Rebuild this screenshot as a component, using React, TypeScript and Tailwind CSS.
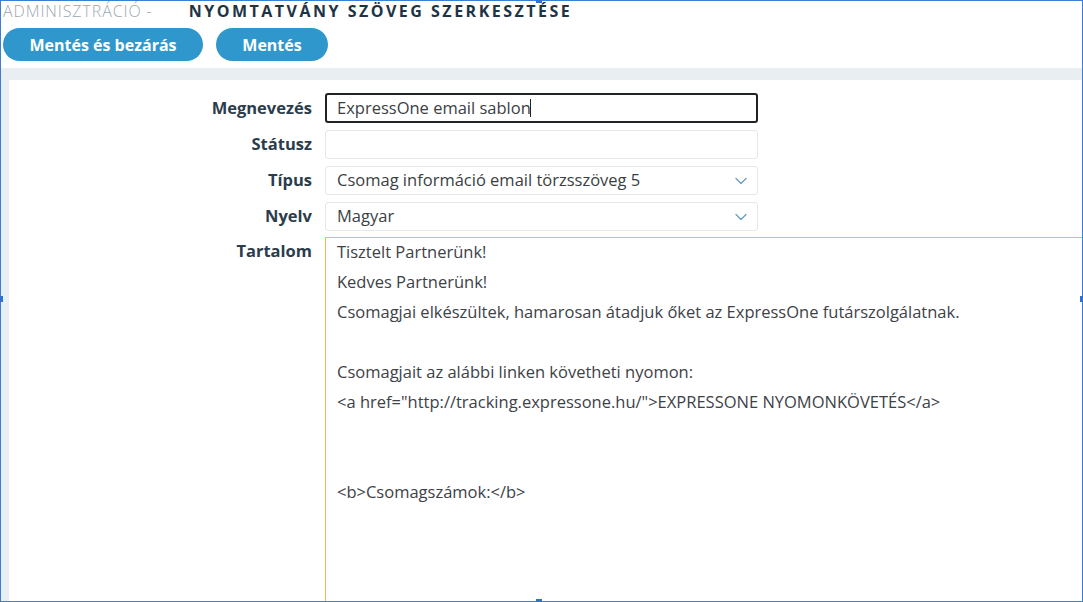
import { ChevronDown } from "lucide-react";

// Űrlap sorai: címke + mező
const FIELDS: { label: string; value: string; kind: "focus" | "text" | "select" }[] = [
  { label: "Megnevezés", value: "ExpressOne email sablon", kind: "focus" },
  { label: "Státusz", value: "", kind: "text" },
  { label: "Típus", value: "Csomag információ email törzsszöveg 5", kind: "select" },
  { label: "Nyelv", value: "Magyar", kind: "select" },
];

const CONTENT_LINES = [
  "Tisztelt Partnerünk!",
  "Kedves Partnerünk!",
  "Csomagjai elkészültek, hamarosan átadjuk őket az ExpressOne futárszolgálatnak.",
  "",
  "Csomagjait az alábbi linken követheti nyomon:",
  '<a href="http://tracking.expressone.hu/">EXPRESSONE NYOMONKÖVETÉS</a>',
  "",
  "",
  "<b>Csomagszámok:</b>",
  "",
  "",
];

export default function App() {
  return (
    <div
      className="relative h-[602px] w-[1083px] overflow-hidden bg-white"
      style={{ fontFamily: '"Open Sans", "Liberation Sans", sans-serif' }}
    >
      {/* Fejléc */}
      <div className="h-[68px] px-[3px] pt-[1px]">
        <h1 className="flex items-baseline text-[16px] leading-[21px] uppercase">
          <span className="font-light tracking-[0.9px] text-[#9ba7b3]">Adminisztráció -</span>
          <span className="ml-[36px] font-bold tracking-[2.5px] text-[#1d3447]">
            Nyomtatvány szöveg szerkesztése
          </span>
        </h1>
        <div className="mt-[6px] flex gap-[13px]">
          <button className="h-[33px] w-[200px] rounded-full bg-[#3097cc] text-[16px] font-bold text-white">
            Mentés és bezárás
          </button>
          <button className="h-[33px] w-[112px] rounded-full bg-[#3097cc] text-[16px] font-bold text-white">
            Mentés
          </button>
        </div>
      </div>

      {/* Szerkesztő panel */}
      <div className="h-full bg-[#e9eef2] pl-[9px] pt-[12px]">
        <div className="h-full bg-white pt-[13px]">
          <div className="flex flex-col gap-[7px]">
            {FIELDS.map((f) => (
              <div key={f.label} className="flex items-center">
                <label className="w-[316px] pr-[13px] text-right text-[16.5px] font-bold text-[#2b3d4c]">
                  {f.label}
                </label>
                <div
                  className={
                    f.kind === "focus"
                      ? "flex h-[30px] w-[433px] items-center rounded-[3px] border-2 border-[#1f2326] pl-[10px] text-[16.5px] text-[#3a3f44]"
                      : "flex h-[29px] w-[433px] items-center justify-between rounded-[3px] border border-[#e3e8ec] pl-[11px] pr-[6px] text-[16.5px] text-[#3a3f44]"
                  }
                >
                  <span>
                    {f.value}
                    {f.kind === "focus" && (
                      <span className="ml-[-1px] inline-block h-[18px] w-[1.5px] translate-y-[3px] bg-[#222]" />
                    )}
                  </span>
                  {f.kind === "select" && (
                    <ChevronDown className="h-[20px] w-[20px] text-[#6a9dbd]" strokeWidth={1.5} />
                  )}
                </div>
              </div>
            ))}

            <div className="flex items-start">
              <label className="w-[316px] pr-[13px] pt-[1px] text-right text-[16.5px] font-bold text-[#2b3d4c]">
                Tartalom
              </label>
              <div className="-mt-[1px] h-[400px] flex-1 border border-r-0 border-[#ecbd55] pl-[11px] text-[16.5px] leading-[30px] text-[#3d4247]">
                <div className="-mt-[1px]">
                  {CONTENT_LINES.map((line, i) => (
                    <div key={i} className="h-[30px] whitespace-pre">
                      {line}
                    </div>
                  ))}
                </div>
              </div>
            </div>
          </div>
        </div>
      </div>

      {/* Kijelölő keret a kép körül */}
      <div className="pointer-events-none absolute inset-0 border-[1.5px] border-[#3b7fd0]" />
      <div className="pointer-events-none absolute left-[536px] top-[-2px] h-[5px] w-[6px] bg-[#2f72d0]" />
      <div className="pointer-events-none absolute left-[536px] bottom-[-2px] h-[5px] w-[6px] bg-[#2f72d0]" />
      <div className="pointer-events-none absolute left-[-2px] top-[296px] h-[6px] w-[5px] bg-[#2f72d0]" />
      <div className="pointer-events-none absolute right-[-2px] top-[296px] h-[6px] w-[5px] bg-[#2f72d0]" />
    </div>
  );
}
